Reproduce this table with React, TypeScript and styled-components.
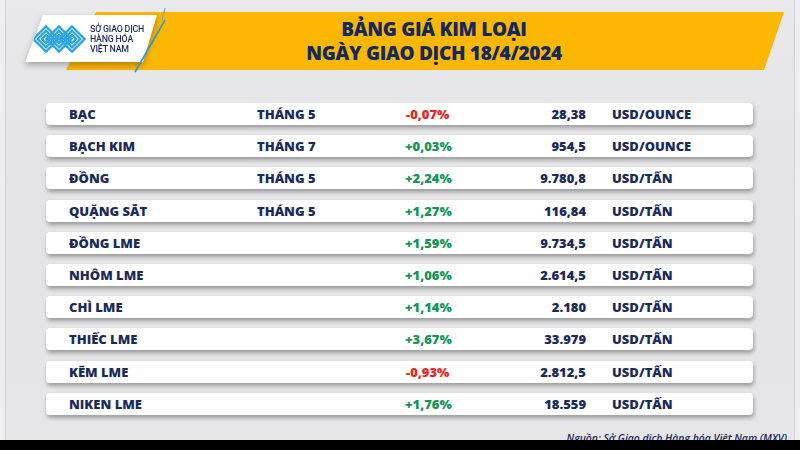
import React from "react";
import styled, { createGlobalStyle } from "styled-components";

const Global = createGlobalStyle`
  html, body { margin: 0; padding: 0; }
  body { width: 800px; height: 450px; overflow: hidden; background: #eeeef0; }
  #root { width: 800px; height: 450px; }
`;

const Page = styled.div`
  width: 800px;
  height: 450px;
  display: flex;
  flex-direction: column;
  font-family: "Open Sans", "Noto Sans", sans-serif;
`;

const Frame = styled.div`
  flex: 1;
  margin: 0 5px;
  border-left: 1px solid #cfcfd3;
  border-right: 1px solid #cfcfd3;
  background: linear-gradient(180deg, #e9e9eb 0%, #e4e4e7 40%, #e6e6e9 100%);
  display: flex;
  flex-direction: column;
  overflow: hidden;
`;

const BlackBar = styled.div`
  height: 10px;
  background: #000;
`;

const Header = styled.div`
  position: relative;
  padding-top: 12px;
`;

const Banner = styled.div`
  height: 58px;
  margin-left: 60px;
  margin-right: 10px;
  padding-left: 18px;
  background: #fbb701;
  clip-path: polygon(30px 0, 100% 0, calc(100% - 20px) 100%, 0 100%);
  display: flex;
  flex-direction: column;
  align-items: center;
  justify-content: center;
`;

const TitleLine = styled.div`
  font-family: "Open Sans", sans-serif;
  font-weight: 800;
  font-size: 19px;
  line-height: 24px;
  color: #13295e;
  letter-spacing: -0.3px;
`;

const LogoWrap = styled.div`
  position: absolute;
  left: 19px;
  top: 15px;
  filter: drop-shadow(0 3px 3px rgba(0, 0, 0, 0.3));
`;

const LogoCard = styled.div`
  width: 132px;
  height: 47px;
  background: #ffffff;
  clip-path: polygon(18px 0, 100% 0, calc(100% - 14px) 100%, 0 100%);
  display: flex;
  align-items: center;
  gap: 4px;
  padding-left: 7px;
  box-sizing: border-box;
`;

const LogoText = styled.div`
  font-family: Roboto, "Liberation Sans", sans-serif;
  font-weight: 500;
  font-size: 8.8px;
  line-height: 9.8px;
  color: #1d2d5e;
  margin-top: 3px;
  letter-spacing: -0.2px;
`;

const Slash = styled.svg`
  position: absolute;
  left: 126px;
  top: 6px;
`;

const Table = styled.div`
  margin: 33px 0 0 40px;
  width: 707px;
  display: grid;
  row-gap: 10.2px;
`;

const Row = styled.div`
  height: 22px;
  background: #ffffff;
  border-radius: 4px;
  box-shadow: 1px 3px 4px rgba(0, 0, 0, 0.32);
  display: grid;
  grid-template-columns: 188px 148px 80px 101px 1fr;
  align-items: center;
  padding-left: 23px;
  font-family: "Open Sans", sans-serif;
  font-weight: 800;
  font-size: 13px;
  color: #1a2a5c;
  letter-spacing: 0px;
`;

const Cell = styled.div<{ $align?: "left" | "right"; $pad?: number }>`
  text-align: ${(p) => p.$align ?? "left"};
  padding-left: ${(p) => p.$pad ?? 0}px;
  white-space: nowrap;
`;

const Change = styled.div<{ $up: boolean }>`
  color: ${(p) => (p.$up ? "#15955a" : "#e8261f")};
  padding-left: ${(p) => (p.$up ? 0 : 1)}px;
  white-space: nowrap;
`;

const Source = styled.div`
  margin-top: 16px;
  padding-right: 7px;
  text-align: right;
  font-family: "Open Sans", sans-serif;
  font-style: italic;
  font-weight: 600;
  font-size: 10.4px;
  line-height: 14px;
  color: #1a2a5c;
`;

type Item = { name: string; month: string; change: string; price: string; unit: string };

const data: Item[] = [
  { name: "BẠC", month: "THÁNG 5", change: "-0,07%", price: "28,38", unit: "USD/OUNCE" },
  { name: "BẠCH KIM", month: "THÁNG 7", change: "+0,03%", price: "954,5", unit: "USD/OUNCE" },
  { name: "ĐỒNG", month: "THÁNG 5", change: "+2,24%", price: "9.780,8", unit: "USD/TẤN" },
  { name: "QUẶNG SẮT", month: "THÁNG 5", change: "+1,27%", price: "116,84", unit: "USD/TẤN" },
  { name: "ĐỒNG LME", month: "", change: "+1,59%", price: "9.734,5", unit: "USD/TẤN" },
  { name: "NHÔM LME", month: "", change: "+1,06%", price: "2.614,5", unit: "USD/TẤN" },
  { name: "CHÌ LME", month: "", change: "+1,14%", price: "2.180", unit: "USD/TẤN" },
  { name: "THIẾC LME", month: "", change: "+3,67%", price: "33.979", unit: "USD/TẤN" },
  { name: "KẼM LME", month: "", change: "-0,93%", price: "2.812,5", unit: "USD/TẤN" },
  { name: "NIKEN LME", month: "", change: "+1,76%", price: "18.559", unit: "USD/TẤN" },
];

const diamond = (cx: number, cy: number, r: number) =>
  `M${cx} ${cy - r} L${cx + r} ${cy} L${cx} ${cy + r} L${cx - r} ${cy} Z`;

const LogoIcon = () => (
  <svg width="54" height="30" viewBox="0 0 54 30">
    <g fill="none" stroke="#2aa5e0" strokeWidth="2.3" strokeLinejoin="miter">
      {[14, 27, 40].map((cx) =>
        [12.5, 8.3, 4.1].map((r) => <path key={`${cx}-${r}`} d={diamond(cx, 15, r)} />)
      )}
    </g>
  </svg>
);

export default function App() {
  return (
    <Page>
      <Global />
      <Frame>
        <Header>
          <Banner>
            <TitleLine>BẢNG GIÁ KIM LOẠI</TitleLine>
            <TitleLine>NGÀY GIAO DỊCH 18/4/2024</TitleLine>
          </Banner>
          <LogoWrap>
            <LogoCard>
              <LogoIcon />
              <LogoText>
                SỞ GIAO DỊCH
                <br />
                HÀNG HÓA
                <br />
                VIỆT NAM
              </LogoText>
            </LogoCard>
          </LogoWrap>
          <Slash width="40" height="70" viewBox="0 0 40 70">
            <line x1="33" y1="2" x2="30" y2="14" stroke="#4fa3d8" strokeWidth="1" />
            <line x1="33" y1="14" x2="3" y2="66" stroke="#2e97d6" strokeWidth="1.6" />
          </Slash>
        </Header>
        <Table>
          {data.map((d) => (
            <Row key={d.name}>
              <Cell>{d.name}</Cell>
              <Cell>{d.month}</Cell>
              <Change $up={d.change.startsWith("+")}>{d.change}</Change>
              <Cell $align="right">{d.price}</Cell>
              <Cell $pad={26}>{d.unit}</Cell>
            </Row>
          ))}
        </Table>
        <Source>Nguồn: Sở Giao dịch Hàng hóa Việt Nam (MXV)</Source>
      </Frame>
      <BlackBar />
    </Page>
  );
}
